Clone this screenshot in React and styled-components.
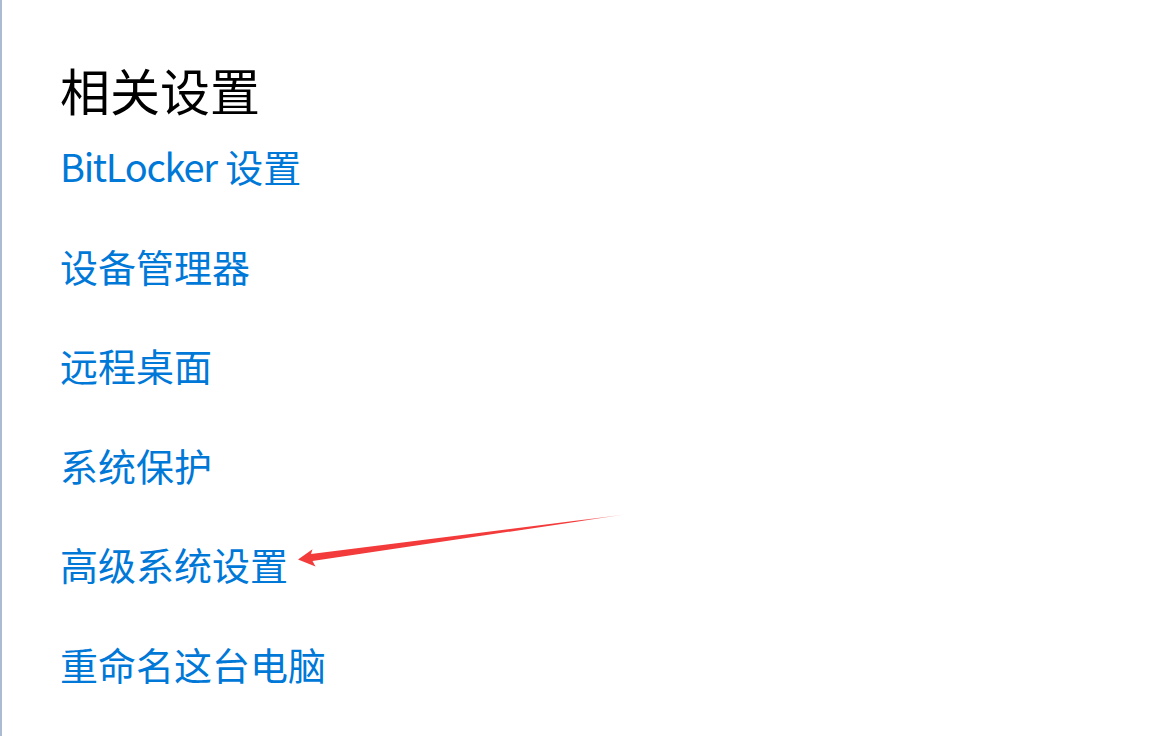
import React from 'react';
import styled, { createGlobalStyle } from 'styled-components';

const GlobalStyle = createGlobalStyle`
  html, body {
    margin: 0;
    padding: 0;
    background: #ffffff;
  }
  body {
    font-family: "Noto Sans CJK SC", "Noto Sans", sans-serif;
  }
`;

const Page = styled.div`
  position: relative;
  width: 1170px;
  height: 736px;
  box-sizing: border-box;
  border-left: 2px solid #aabcd1;
  background: #ffffff;
  overflow: hidden;
`;

const Section = styled.section`
  display: flex;
  flex-direction: column;
  padding: 60px 0 0 58px;
`;

const Heading = styled.h2`
  margin: 0;
  font-size: 50px;
  font-weight: 400;
  line-height: 58px;
  color: #000000;
`;

const LinkList = styled.div`
  display: flex;
  flex-direction: column;
  align-items: flex-start;
  gap: 39.6px;
  margin-top: 18px;
`;

const SettingLink = styled.a`
  font-size: 38px;
  line-height: 60px;
  color: #0078d7;
  text-decoration: none;
  cursor: pointer;
  white-space: nowrap;
`;

const Latin = styled.span`
  letter-spacing: -1.3px;
`;

const Annotation = styled.svg`
  position: absolute;
  left: 0;
  top: 0;
  pointer-events: none;
`;

const links = [
  { latin: 'BitLocker', label: '设置' },
  { label: '设备管理器' },
  { label: '远程桌面' },
  { label: '系统保护' },
  { label: '高级系统设置' },
  { label: '重命名这台电脑' },
];

const Arrow = () => (
  <Annotation width="1170" height="736" viewBox="0 0 1170 736">
    <defs>
      <linearGradient id="fade" x1="296" y1="0" x2="624" y2="0" gradientUnits="userSpaceOnUse">
        <stop offset="0" stopColor="#f33b3b" />
        <stop offset="0.85" stopColor="#f33b3b" />
        <stop offset="1" stopColor="#f33b3b" stopOpacity="0.25" />
      </linearGradient>
    </defs>
    <polygon
      points="296,559.5 310.5,549.2 309,554 623,514.5 310.5,561 313.5,566.5 296,559.5"
      fill="url(#fade)"
    />
  </Annotation>
);

export default function App() {
  return (
    <>
      <GlobalStyle />
      <Page>
        <Section>
          <Heading>相关设置</Heading>
          <LinkList>
            {links.map(({ latin, label }) => (
              <SettingLink key={label + (latin || '')}>
                {latin && <Latin>{latin}</Latin>}
                {latin ? ' ' : ''}
                {label}
              </SettingLink>
            ))}
          </LinkList>
        </Section>
        <Arrow />
      </Page>
    </>
  );
}
